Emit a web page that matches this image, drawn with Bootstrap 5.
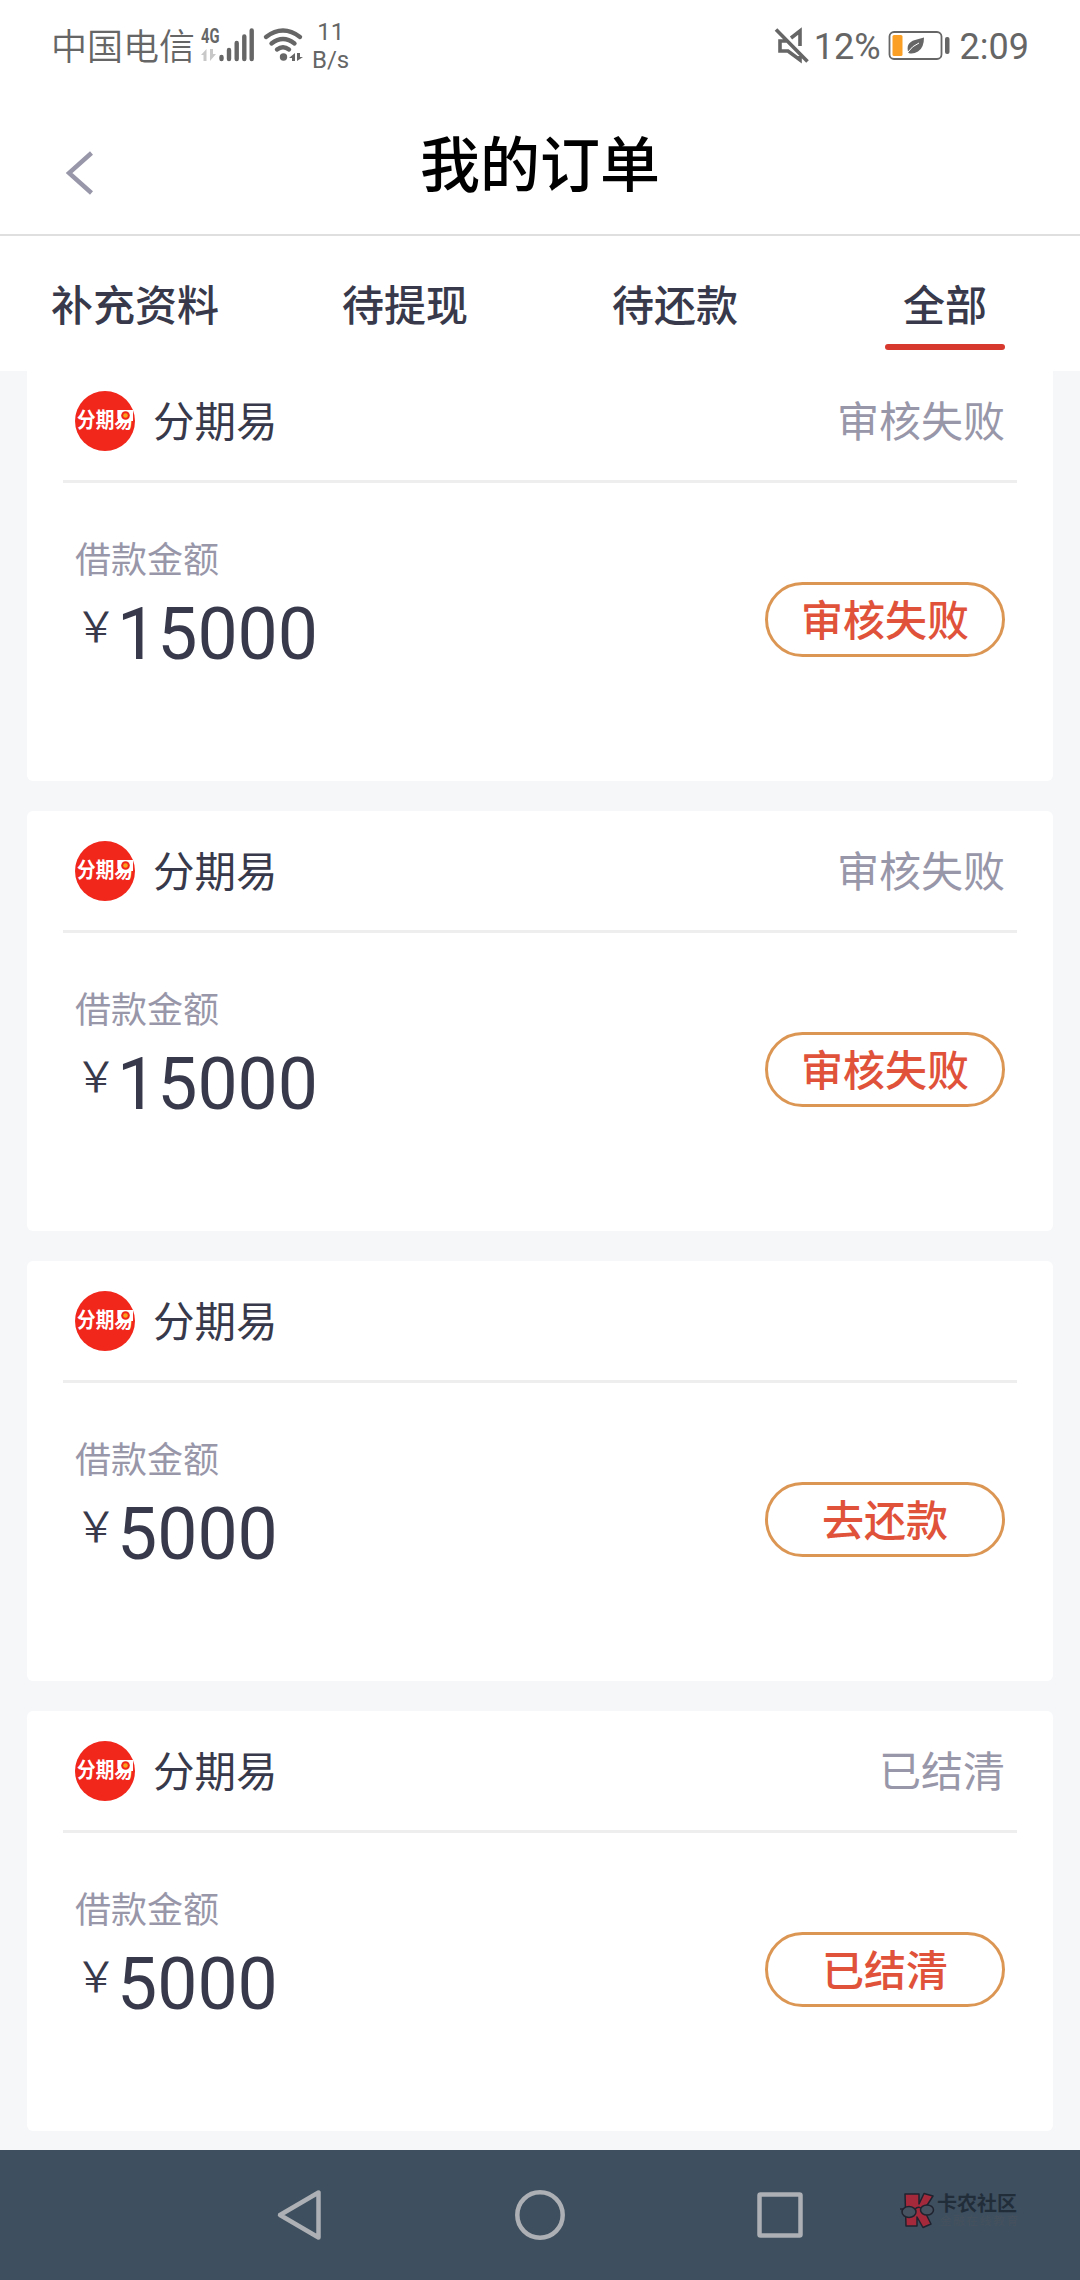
<!DOCTYPE html>
<html lang="zh-CN">
<head>
<meta charset="utf-8">
<meta name="viewport" content="width=device-width, initial-scale=1">
<title>我的订单</title>
<link href="https://cdn.jsdelivr.net/npm/bootstrap@5.3.0/dist/css/bootstrap.min.css" rel="stylesheet">
<style>
  body { font-family: Roboto, "Noto Sans CJK SC", sans-serif; background: #f6f7f9; color: #383a4b; height: 2280px; overflow: hidden; line-height: 1; }
  svg { display: block; flex: none; }
  .status-bar { height: 90px; padding: 0 51px; color: #666; font-size: 36px; }
  .status-bar span { padding-top: 4px; }
  .status-bar .carrier { font-weight: 350; padding-top: 5px; }
  .net-speed { font-size: 24px; line-height: 28px; margin-left: 5px; padding-top: 2px; }
  .battery { margin-left: 3px; }
  .title-bar { height: 146px; border-bottom: 2px solid #dfdfdf; padding-left: 66px; }
  .back-icon { margin-top: 22px; }
  .page-title { font-size: 60px; font-weight: 500; color: #000; padding-top: 9px; }
  .tab-bar { height: 135px; z-index: 2; }
  .tab-bar .nav-link { height: 114px; font-size: 42px; font-weight: 500; color: #383a4b; padding: 50px 0 0; line-height: 42px; }
  .tab-mark { width: 120px; height: 6px; border-radius: 3px; background: #d8392f; margin-top: 16px; }
  .order-list { margin-top: -10px; padding: 0 27px; gap: 30px; }
  .order-card { height: 420px; border: 0; border-radius: 6px; }
  .order-head { height: 122px; margin: 0 36px; padding: 0 12px; border-bottom: 3px solid #eee; font-size: 42px; }
  .order-head > span { padding-top: 4px; }
  .shop-name { margin-left: 18px; font-size: 41.500px; }
  .brand-logo { width: 60px; height: 60px; background: #f1271c; color: #fff; }
  .brand-text { font-size: 18.700px; font-weight: 700; transform: scaleY(1.12); white-space: nowrap; }
  .brand-sun { right: 2px; top: 19px; }
  .muted-text { color: #9896a9; }
  .order-label { font-size: 36px; margin-top: 60px; line-height: 36px; }
  .order-body { padding: 0 48px; }
  .order-amount { font-size: 71.500px; line-height: 84px; padding-top: 14px; }
  .yuan { font-family: "Noto Sans CJK SC"; font-weight: 350; font-size: 42px; line-height: 42px; margin-top: 10px; }
  .order-btn { width: 240px; height: 75px; margin-top: 99px; border: 3px solid #dc9654; color: #e0523a; font-size: 42px; font-weight: 500; padding: 5px 0 0; line-height: 64px; }
  .nav-keys { height: 130px; background: #3e4f5f; }
</style>
<script src="https://cdn.jsdelivr.net/npm/bootstrap@5.3.0/dist/js/bootstrap.bundle.min.js"></script>
</head>
<body class="d-flex flex-column">
<header class="status-bar bg-white d-flex align-items-center justify-content-between">
  <div class="d-flex align-items-center">
    <span class="carrier">中国电信</span>
    <svg width="112" height="50" viewBox="195 20 112 50" fill="#666">
      <text x="201" y="43" font-family="Roboto" font-size="21" font-weight="700" textLength="18.500" lengthAdjust="spacingAndGlyphs">4G</text>
      <path fill="#c8c8c8" d="M201 55L206.500 49V61H203.500V55ZM210 49H213V54H216L210 61Z"/>
      <g stroke="#666" stroke-width="4.400" stroke-linecap="round" fill="none">
        <path d="M221.500 57V59M229 50V59M236.700 43V59M244.300 36.500V59M251.700 30.500V59"/>
        <path d="M266 37Q283 24 300 37M271.500 43.500Q283 34.500 294.500 43.500M277 49.500Q283 45 289 49.500"/>
      </g>
      <circle cx="283.500" cy="57" r="3.700"/>
      <path d="M289 58L295 53V61H292V58ZM297 53H300V57H303L297 61Z"/>
    </svg>
    <div class="net-speed text-center"><div>11</div><div>B/s</div></div>
  </div>
  <div class="d-flex align-items-center">
    <svg width="40" height="50" viewBox="774 20 40 50" fill="none" stroke="#666" stroke-width="3.600">
      <path d="M776 29.500L807.500 61.500M791 38L800 31V46M787 41H780V51H788L800 60V56"/>
    </svg>
    <span>12%</span>
    <svg class="battery" width="76" height="50" viewBox="884 20 76 50">
      <rect x="889.500" y="32" width="52" height="27" rx="4.500" fill="none" stroke="#666" stroke-width="1.800"/>
      <rect x="892.500" y="35" width="10" height="21" rx="1.500" fill="#fb9f24"/>
      <path fill="#666" d="M908.500 53Q905 43 915 40L924 37.500Q924 48 918 51.500Q913 54.500 908.500 53Z"/>
      <path d="M908 52Q912 46 919 43" stroke="#fff" fill="none"/>
      <rect x="945" y="37" width="4.500" height="17" rx="2" fill="#666"/>
    </svg>
    <span>2:09</span>
  </div>
</header>

<div class="title-bar bg-white d-flex align-items-center position-relative">
  <svg class="back-icon" width="28" height="44" viewBox="0 0 28 44"><path d="M25.500 2L3 22L25.500 42" fill="none" stroke="#9896a9" stroke-width="4.500"/></svg>
  <div class="page-title position-absolute start-0 w-100 text-center">我的订单</div>
</div>

<nav class="tab-bar bg-white nav nav-justified position-relative flex-nowrap">
  <a class="nav-link col-3" href="#">补充资料</a>
  <a class="nav-link col-3" href="#">待提现</a>
  <a class="nav-link col-3" href="#">待还款</a>
  <a class="nav-link col-3 active" href="#">全部<div class="tab-mark mx-auto"></div></a>
</nav>

<main class="order-list d-flex flex-column flex-grow-1">
  <section class="order-card card">
    <div class="order-head d-flex align-items-center">
      <div class="brand-logo rounded-circle position-relative d-flex align-items-center justify-content-center"><div class="brand-text">分期易</div><svg class="brand-sun position-absolute" width="15" height="11"><rect width="15" height="11" fill="#fff"/><circle cx="7.500" cy="5.500" r="4.300" fill="#f1271c"/><circle cx="7.500" cy="5.500" r="2.300" fill="#f7a51c"/></svg></div>
      <span class="shop-name">分期易</span><span class="ms-auto muted-text">审核失败</span>
    </div>
    <div class="order-body d-flex justify-content-between"><div><div class="order-label muted-text">借款金额</div><div class="order-amount d-flex"><span class="yuan">￥</span>15000</div></div><button class="order-btn btn rounded-pill">审核失败</button></div>
  </section>
  <section class="order-card card">
    <div class="order-head d-flex align-items-center">
      <div class="brand-logo rounded-circle position-relative d-flex align-items-center justify-content-center"><div class="brand-text">分期易</div><svg class="brand-sun position-absolute" width="15" height="11"><rect width="15" height="11" fill="#fff"/><circle cx="7.500" cy="5.500" r="4.300" fill="#f1271c"/><circle cx="7.500" cy="5.500" r="2.300" fill="#f7a51c"/></svg></div>
      <span class="shop-name">分期易</span><span class="ms-auto muted-text">审核失败</span>
    </div>
    <div class="order-body d-flex justify-content-between"><div><div class="order-label muted-text">借款金额</div><div class="order-amount d-flex"><span class="yuan">￥</span>15000</div></div><button class="order-btn btn rounded-pill">审核失败</button></div>
  </section>
  <section class="order-card card">
    <div class="order-head d-flex align-items-center">
      <div class="brand-logo rounded-circle position-relative d-flex align-items-center justify-content-center"><div class="brand-text">分期易</div><svg class="brand-sun position-absolute" width="15" height="11"><rect width="15" height="11" fill="#fff"/><circle cx="7.500" cy="5.500" r="4.300" fill="#f1271c"/><circle cx="7.500" cy="5.500" r="2.300" fill="#f7a51c"/></svg></div>
      <span class="shop-name">分期易</span>
    </div>
    <div class="order-body d-flex justify-content-between"><div><div class="order-label muted-text">借款金额</div><div class="order-amount d-flex"><span class="yuan">￥</span>5000</div></div><button class="order-btn btn rounded-pill">去还款</button></div>
  </section>
  <section class="order-card card">
    <div class="order-head d-flex align-items-center">
      <div class="brand-logo rounded-circle position-relative d-flex align-items-center justify-content-center"><div class="brand-text">分期易</div><svg class="brand-sun position-absolute" width="15" height="11"><rect width="15" height="11" fill="#fff"/><circle cx="7.500" cy="5.500" r="4.300" fill="#f1271c"/><circle cx="7.500" cy="5.500" r="2.300" fill="#f7a51c"/></svg></div>
      <span class="shop-name">分期易</span><span class="ms-auto muted-text">已结清</span>
    </div>
    <div class="order-body d-flex justify-content-between"><div><div class="order-label muted-text">借款金额</div><div class="order-amount d-flex"><span class="yuan">￥</span>5000</div></div><button class="order-btn btn rounded-pill">已结清</button></div>
  </section>
</main>

<footer class="nav-keys">
  <svg width="1080" height="130" viewBox="0 2150 1080 130">
    <g fill="none" stroke="#adb0b4" stroke-width="4.500" stroke-linejoin="round">
      <path d="M280 2215L318.500 2192.500V2237.500Z"/>
      <circle cx="540" cy="2215" r="22.700"/>
      <rect x="759.500" y="2194.500" width="41" height="41" rx="1"/>
    </g>
    <g stroke="#20232f" stroke-width="1.500" stroke-linejoin="round">
      <path fill="#a4293b" d="M905 2194H919V2204L924 2193.500L933 2196L924 2210L931 2224L923 2227.500L917 2217V2226H906Z"/>
      <ellipse cx="909" cy="2212" rx="7" ry="5.500" fill="#46525f"/>
      <ellipse cx="927" cy="2210" rx="6.500" ry="5" fill="#46525f"/>
      <path fill="none" d="M900 2209L903 2209M915 2209Q918 2206 921 2208"/>
    </g>
    <text x="937" y="2211" font-family="Noto Sans CJK SC" font-size="20" font-weight="700" fill="#222d3a" textLength="80">卡农社区</text>
    <text x="940" y="2225" font-family="Noto Sans CJK SC" font-size="11.500" fill="#46515d" textLength="78">金融在线教育</text>
  </svg>
</footer>
</body>
</html>
